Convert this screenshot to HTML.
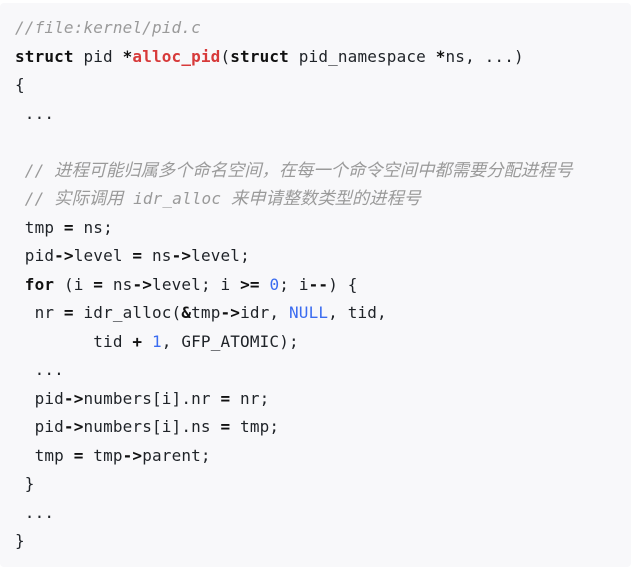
<!DOCTYPE html>
<html><head><meta charset="utf-8"><style>
html,body{margin:0;padding:0;background:#fff;}
.box{position:absolute;left:0;top:3px;width:631px;height:564px;background:#f8f8fa;border-radius:4px;}
pre{position:absolute;left:15px;top:14px;margin:0;font-family:"DejaVu Sans Mono","Noto Sans CJK SC",monospace;font-size:16px;letter-spacing:0.15px;line-height:28.5px;color:#1f2328;}
.c{color:#9a9a9a;font-style:italic;}
.z{font-size:17.3px;letter-spacing:0;line-height:0;}
.k{font-weight:bold;color:#111;}
.f{color:#d73a3a;font-weight:bold;}
.n{color:#3b6cf0;}
</style></head><body><div class="box"></div><pre><span class="c">//file:kernel/pid.c</span>
<span class="k">struct</span> pid <span class="k">*</span><span class="f">alloc_pid</span>(<span class="k">struct</span> pid_namespace <span class="k">*</span>ns, ...)
{
 ...

 <span class="c">// <span class="z">进程可能归属多个命名空间，在每一个命令空间中都需要分配进程号</span></span>
 <span class="c">// <span class="z">实际调用</span> idr_alloc <span class="z">来申请整数类型的进程号</span></span>
 tmp <span class="k">=</span> ns;
 pid<span class="k">-&gt;</span>level <span class="k">=</span> ns<span class="k">-&gt;</span>level;
 <span class="k">for</span> (i <span class="k">=</span> ns<span class="k">-&gt;</span>level; i <span class="k">&gt;=</span> <span class="n">0</span>; i<span class="k">--</span>) {
  nr <span class="k">=</span> idr_alloc(<span class="k">&amp;</span>tmp<span class="k">-&gt;</span>idr, <span class="n">NULL</span>, tid,
        tid <span class="k">+</span> <span class="n">1</span>, GFP_ATOMIC);
  ...
  pid<span class="k">-&gt;</span>numbers[i].nr <span class="k">=</span> nr;
  pid<span class="k">-&gt;</span>numbers[i].ns <span class="k">=</span> tmp;
  tmp <span class="k">=</span> tmp<span class="k">-&gt;</span>parent;
 }
 ...
}</pre></body></html>
